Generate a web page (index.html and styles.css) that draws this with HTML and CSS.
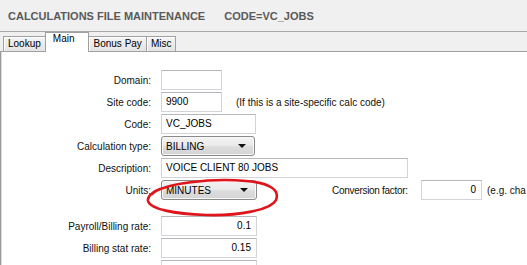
FILE: index.html
```html
<!DOCTYPE html>
<html>
<head>
<meta charset="utf-8">
<link rel="stylesheet" href="styles.css">
</head>
<body>
<header class="title"><span>CALCULATIONS FILE MAINTENANCE</span><span class="code">CODE=VC_JOBS</span></header>
<nav class="tabs">
  <div class="tab">Lookup</div>
  <div class="tab active">Main</div>
  <div class="tab">Bonus Pay</div>
  <div class="tab">Misc</div>
</nav>
<main class="panel">
  <div class="row"><label class="lbl">Domain:</label><div class="inp w60"></div></div>
  <div class="row"><label class="lbl">Site code:</label><div class="inp w60">9900</div><span class="note n1">(If this is a site-specific calc code)</span></div>
  <div class="row"><label class="lbl">Code:</label><div class="inp w95">VC_JOBS</div></div>
  <div class="row"><label class="lbl">Calculation type:</label><div class="sel w94"><span>BILLING</span><i class="arrow"></i></div></div>
  <div class="row"><label class="lbl">Description:</label><div class="inp w247">VOICE CLIENT 80 JOBS</div></div>
  <div class="row"><label class="lbl">Units:</label><div class="sel w96"><span>MINUTES</span><i class="arrow"></i></div>
    <label class="conv">Conversion factor:</label><div class="inp w60 num">0</div><span class="note n2">(e.g. cha</span></div>
  <div class="row gap"><label class="lbl">Payroll/Billing rate:</label><div class="inp w96 num">0.1</div></div>
  <div class="row"><label class="lbl">Billing stat rate:</label><div class="inp w96 num">0.15</div></div>
  <div class="row"><label class="lbl"></label><div class="inp w96 num"></div></div>
  <svg class="circle" width="140" height="46" viewBox="0 0 140 46">
    <path d="M10 18 C 22 7, 70 2, 104 5 C 128 7, 138 14, 134 24 C 129 34, 96 40, 64 39 C 32 38, 8 33, 6 25 C 5 20, 12 15, 18 13" fill="none" stroke="#e0141b" stroke-width="2.6" stroke-linecap="round"/>
  </svg>
</main>
</body>
</html>
```
FILE: styles.css
```css
html, body {
  margin: 0;
  padding: 0;
  background: #fff;
  width: 527px;
  height: 265px;
  overflow: hidden;
}
body {
  font-family: "Liberation Sans", Arial, sans-serif;
  font-size: 10px;
  color: #000;
}
.title {
  height: 31px;
  background: #f0f0f0;
  color: #5a5a5a;
  font-weight: bold;
  font-size: 11px;
  padding-left: 8px;
  display: flex;
  align-items: center;
  box-sizing: border-box;
  padding-top: 1px;
}
.title .code {
  margin-left: 19px;
}
.tabs {
  display: flex;
  align-items: flex-end;
  height: 19px;
  background: #f0f0f0;
  border-top: 1px solid #a8a8a8;
  border-bottom: 1px solid #a0a0a0;
  padding-left: 3px;
}
.tab {
  height: 14px;
  line-height: 13px;
  padding: 0 4px;
  border: 1px solid #a0a0a0;
  border-bottom: none;
  background: linear-gradient(#f4f4f4, #e4e4e4);
  box-shadow: inset 1px 1px 0 #fff;
  margin-right: -1px;
  font-size: 10px;
}
.tab.active {
  height: 19px;
  line-height: 12px;
  background: #fff;
  box-shadow: none;
  margin-bottom: -1px;
  padding: 0 13px 0 7px;
  position: relative;
  z-index: 1;
}
.tab:nth-child(3) { padding: 0 4px 0 5px; }
.panel {
  position: relative;
  height: 213px;
  border-left: 1px solid #9a9a9a;
  box-shadow: inset 1px 0 0 #dcdcdc;
  padding-top: 18px;
  box-sizing: border-box;
  overflow: hidden;
}
.row {
  display: flex;
  align-items: center;
  height: 20px;
  margin-bottom: 2px;
  white-space: nowrap;
}
.row > * {
  flex-shrink: 0;
}
.row.gap {
  margin-top: 16px;
}
.lbl {
  width: 150px;
  text-align: right;
  margin-right: 10px;
  color: #111;
}
.inp {
  height: 20px;
  box-sizing: border-box;
  border: 1px solid #d2d4d8;
  border-top-color: #b4b7bc;
  background: #fff;
  padding: 2px 3px 0 4px;
  line-height: 14px;
  font-size: 10px;
  white-space: nowrap;
  overflow: hidden;
}
.inp.num {
  text-align: right;
  padding-right: 5px;
}
.w60 { width: 61px; }
.w95 { width: 95px; }
.w94 { width: 94px; }
.w96 { width: 96px; }
.w247 { width: 247px; }
.sel {
  height: 20px;
  box-sizing: border-box;
  border: 1px solid #8a8a8a;
  border-radius: 3px;
  background: linear-gradient(#f3f3f3 0%, #ebebeb 45%, #dcdcdc 55%, #d4d4d4 100%);
  box-shadow: inset 0 0 0 1px #f8f8f8;
  display: flex;
  align-items: center;
  justify-content: space-between;
  padding: 0 8px 0 4px;
  font-size: 10px;
}
.arrow {
  width: 0;
  height: 0;
  border-left: 4px solid transparent;
  border-right: 4px solid transparent;
  border-top: 4px solid #111;
}
.note {
  color: #111;
  white-space: nowrap;
}
.n1 { margin-left: 14px; }
.n2 { margin-left: 5px; }
.conv {
  margin-left: 75px;
  width: 89px;
  letter-spacing: -0.3px;
  color: #111;
}
.circle {
  position: absolute;
  left: 141px;
  top: 124px;
}
```
